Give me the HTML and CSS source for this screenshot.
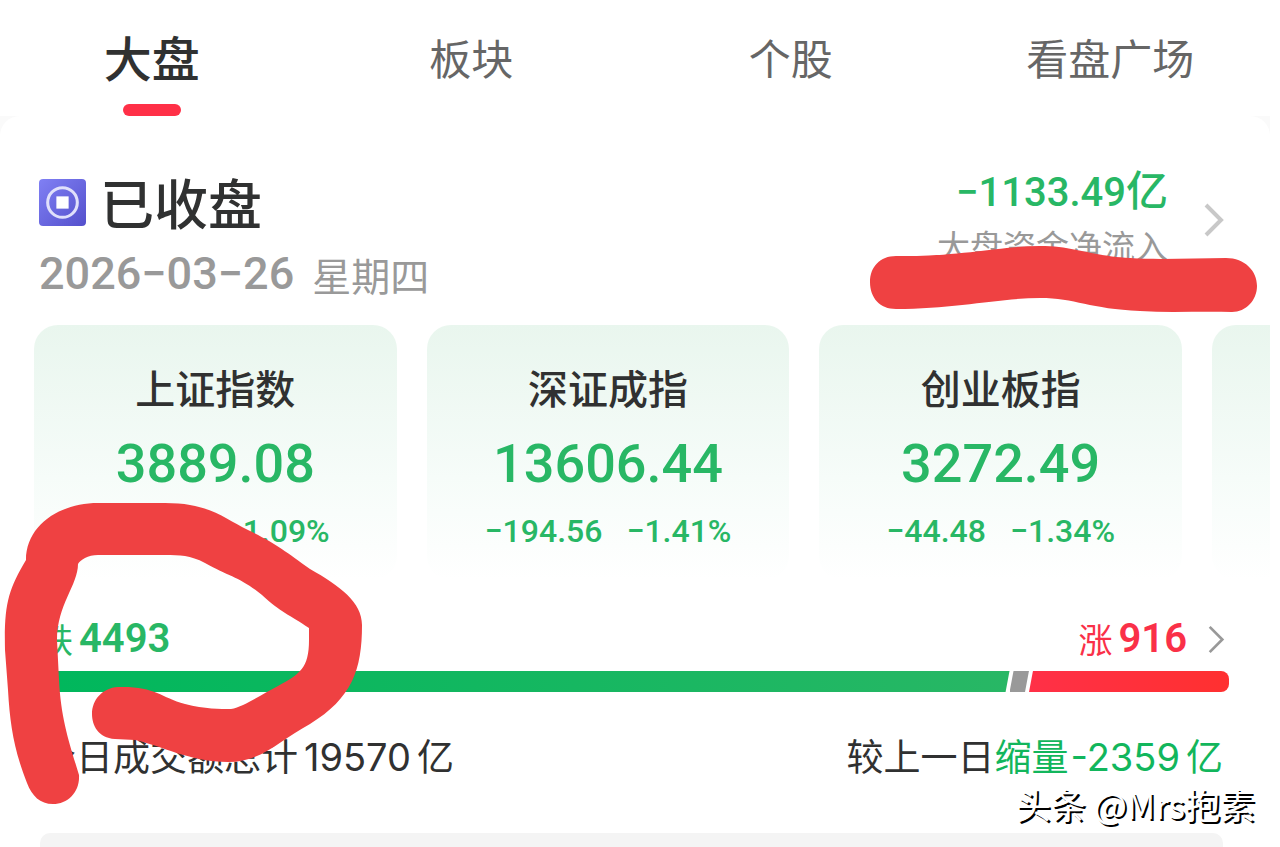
FILE: index.html
```
<!DOCTYPE html>
<html lang="zh-CN">
<head>
    <meta charset="UTF-8">
    <meta name="viewport" content="width=device-width, initial-scale=1.0">
    <title>大盘</title>
    <link rel="stylesheet" href="styles.css">
</head>
<body>
<div class="page">
    <nav class="tabs">
        <a class="tab active" href="#market">大盘</a>
        <a class="tab" href="#sector">板块</a>
        <a class="tab" href="#stock">个股</a>
        <a class="tab" href="#square">看盘广场</a>
    </nav>

    <main class="backdrop">
        <div class="panel" id="market">
            <header class="status">
                <div>
                    <h1 class="status-title">
                        <svg class="coin" viewBox="0 0 46 46" aria-hidden="true">
                            <defs>
                                <linearGradient id="coinFill" x1="0" y1="0" x2="1" y2="1">
                                    <stop offset="0" stop-color="#8080f4"/>
                                    <stop offset="1" stop-color="#5450cc"/>
                                </linearGradient>
                            </defs>
                            <rect width="46" height="46" rx="4" fill="url(#coinFill)"/>
                            <circle cx="23" cy="23" r="14.5" fill="none" stroke="#e0e0fb" stroke-width="3"/>
                            <rect x="17" y="17" width="12" height="12" fill="#fff"/>
                        </svg>
                        已收盘
                    </h1>
                    <p class="date"><span class="date-num">2026−03−26</span><span>星期四</span></p>
                </div>
                <a class="flow" href="#flow">
                    <span class="flow-text">
                        <strong class="flow-value">−1133.49<span class="unit">亿</span></strong>
                        <span class="flow-label">大盘资金净流入</span>
                    </span>
                    <svg class="arrow" viewBox="0 0 20 34" aria-hidden="true"><path d="M2 2 L17 17 L2 32"/></svg>
                    <svg class="mark-line" viewBox="870 244 388 70" aria-hidden="true">
                        <path d="M896 256 C960 257 1000 246 1040 246 C1075 246 1090 256 1130 258 C1160 260 1195 258 1226 258 C1245 258 1257 271 1257 286 C1257 300 1246 312 1232 312 C1200 311 1170 313 1140 311 C1090 309 1075 298 1040 298 C1000 298 955 309 896 309 C880 309 870 298 870 282 C870 267 880 256 896 256 Z"/>
                    </svg>
                </a>
            </header>

            <section class="indexes">
                <article class="index">
                    <h2>上证指数</h2>
                    <p class="price">3889.08</p>
                    <p class="change"><span>−42.76</span><span>−1.09%</span></p>
                </article>
                <article class="index">
                    <h2>深证成指</h2>
                    <p class="price">13606.44</p>
                    <p class="change"><span>−194.56</span><span>−1.41%</span></p>
                </article>
                <article class="index">
                    <h2>创业板指</h2>
                    <p class="price">3272.49</p>
                    <p class="change"><span>−44.48</span><span>−1.34%</span></p>
                </article>
                <article class="index"></article>
            </section>

            <section class="breadth">
                <div class="counts">
                    <span class="count down">跌<b>4493</b></span>
                    <a class="count up" href="#breadth">涨<b>916</b>
                        <svg class="arrow small" viewBox="0 0 20 34" aria-hidden="true"><path d="M3 3 L17 17 L3 31"/></svg>
                    </a>
                </div>
                <div class="bar">
                    <span class="bar-down"></span>
                    <span class="bar-flat"></span>
                    <span class="bar-up"></span>
                </div>
                <div class="turnover">
                    <p>今日成交额总计<span class="num">19570</span>亿</p>
                    <p>较上一日<span class="less">缩量<span class="num">-2359</span>亿</span></p>
                </div>
            </section>

            <div class="next-block"></div>
        </div>
    </main>

    <!-- hand-drawn loop over the falling count -->
    <svg class="mark-loop" viewBox="0 500 364 306" aria-hidden="true">
        <path d="M53 804 C40 804 32 796 27 783 C14 750 10 725 8 690 L5 650 C4 605 8 590 26 560 C26 525 60 503 98 503 H165 C210 503 225 519 248 530 C275 543 285 551 310 569 C340 586 362 602 362 625 C362 670 352 698 310 724 C280 740 262 762 228 762 C190 762 160 745 135 740 L115 739 C98 738 92 725 92 714 C92 700 102 688 118 687 C155 686 160 697 185 704 C205 709 220 709 231 709 C245 706 262 694 278 686 C300 674 309 668 309 640 V628 C290 615 280 612 262 595 C240 577 230 577 205 563 C190 555 180 555 165 555 H98 C88 555 80 560 78 564 C78 585 57 605 57 640 L59 680 C61 720 70 745 79 775 C80 792 68 804 53 804 Z"/>
    </svg>
    <p class="watermark">头条 @Mrs抱素</p>
</div>
</body>
</html>
```
FILE: styles.css
```
* {
    box-sizing: border-box;
}

body {
    margin: 0;
    background: #fff;
    color: #303131;
    font-family: "Noto Sans CJK SC", sans-serif;
}

h1, h2, p {
    margin: 0;
}

a {
    color: inherit;
    text-decoration: none;
}

.page {
    position: relative;
    margin-right: 10px;
}

/* Tabs */
.tabs {
    display: grid;
    grid-template-columns: repeat(4, 1fr);
    height: 116px;
    margin-left: -8px;
}

.tab {
    display: flex;
    flex-direction: column;
    align-items: center;
    justify-content: space-between;
    font-size: 42px;
    line-height: 113px;
    color: #666;
}

.tab.active {
    font-size: 48px;
    font-weight: 500;
    color: #303131;
}

.tab.active::after {
    content: "";
    flex: none;
    width: 58px;
    height: 12px;
    margin-top: -12px;
    border-radius: 6px;
    background: #ff3047;
}

.backdrop {
    background: #fafafa;
}

.panel {
    padding-top: 50px;
    border-radius: 20px 20px 0 0;
    background: #fff;
}

/* Market status */
.status {
    display: flex;
    justify-content: space-between;
    height: 159px;
    padding: 0 46px 0 39px;
}

.status-title {
    display: flex;
    align-items: center;
    gap: 14px;
    font-size: 54px;
    font-weight: 500;
    line-height: 72px;
}

.coin {
    width: 47px;
    height: 47px;
}

.date {
    display: flex;
    align-items: center;
    gap: 18px;
    font-size: 39px;
    line-height: 72px;
    color: #999;
}

.date-num {
    font-family: Roboto, sans-serif;
    font-size: 45px;
    font-weight: 500;
}

.flow {
    position: relative;
    display: flex;
    align-items: flex-start;
    gap: 36px;
    padding-top: 2px;
}

.flow-text {
    display: flex;
    flex-direction: column;
    align-items: flex-end;
}

.flow-value {
    font-family: Roboto, sans-serif;
    font-size: 40px;
    font-weight: 500;
    line-height: 50px;
    color: #28b765;
}

.unit {
    font-family: "Noto Sans CJK SC", sans-serif;
    font-size: 42px;
    line-height: 40px;
}

.flow-label {
    font-size: 33px;
    line-height: 54px;
    color: #999;
}

.arrow {
    width: 20px;
    height: 34px;
    margin-top: 35px;
    fill: none;
    stroke: #c8c8c8;
    stroke-width: 4;
}

.mark-line {
    position: absolute;
    top: 78px;
    right: -34px;
    width: 388px;
    height: 70px;
    fill: #ef4142;
}

/* Index cards */
.indexes {
    display: flex;
    gap: 30px;
    padding-left: 34px;
    overflow: hidden;
}

.index {
    flex: none;
    width: calc((100% - 148px) / 3);
    height: 255px;
    padding-top: 32px;
    border-radius: 24px;
    background: linear-gradient(#e9f6ee, #f6fcf9 60%, #fff);
    text-align: center;
}

.index h2 {
    font-size: 40px;
    font-weight: 500;
    line-height: 60px;
}

.price {
    font-family: Roboto, sans-serif;
    font-size: 54px;
    font-weight: 500;
    line-height: 94px;
    color: #28b765;
}

.change {
    display: flex;
    justify-content: center;
    gap: 24px;
    font-family: Roboto, sans-serif;
    font-size: 32px;
    font-weight: 500;
    line-height: 40px;
    color: #28b765;
}

/* Falling and rising counts */
.breadth {
    padding: 30px 41px 0 39px;
}

.counts {
    display: flex;
    justify-content: space-between;
    line-height: 58px;
}

.count {
    display: flex;
    align-items: center;
    gap: 6px;
    font-size: 34px;
}

.count b {
    font-family: Roboto, sans-serif;
    font-size: 40px;
    font-weight: 600;
}

.down {
    color: #28b765;
}

.up {
    color: #fa3048;
}

.arrow.small {
    width: 18px;
    height: 31px;
    margin: 0 4px 0 14px;
    stroke: #999;
    stroke-width: 3;
}

.bar {
    display: flex;
    height: 21px;
    margin-top: 3px;
    border-radius: 8px;
    overflow: hidden;
}

.bar span {
    clip-path: polygon(4px 0, 100% 0, calc(100% - 4px) 100%, 0 100%);
}

.bar .bar-down {
    flex: 4493;
    background: linear-gradient(90deg, #00b75c, #28b765);
    clip-path: polygon(0 0, 100% 0, calc(100% - 4px) 100%, 0 100%);
}

.bar-flat {
    flex: 90;
    background: #999;
}

.bar .bar-up {
    flex: 926;
    background: linear-gradient(90deg, #ff3047, #ff3030);
    clip-path: polygon(4px 0, 100% 0, 100% 100%, 0 100%);
}

.turnover {
    display: flex;
    justify-content: space-between;
    padding: 33px 6px 0 0;
    font-size: 37px;
    line-height: 60px;
}

.num {
    margin: 0 6px;
    font-family: Inter, sans-serif;
    font-size: 38px;
}

.less {
    color: #12b65c;
}

.less .num {
    margin-left: 2px;
}

.next-block {
    height: 15px;
    margin: 46px 47px 0 40px;
    border-radius: 10px 10px 0 0;
    background: #f4f4f4;
}

/* Overlays */
.mark-loop {
    position: absolute;
    top: 500px;
    left: 0;
    width: 364px;
    height: 306px;
    fill: #ef4142;
}

.watermark {
    position: absolute;
    top: 780px;
    right: 15px;
    font-size: 35px;
    line-height: 48px;
    color: #fff;
    text-shadow: 2px 2px 0 #000;
}
```
